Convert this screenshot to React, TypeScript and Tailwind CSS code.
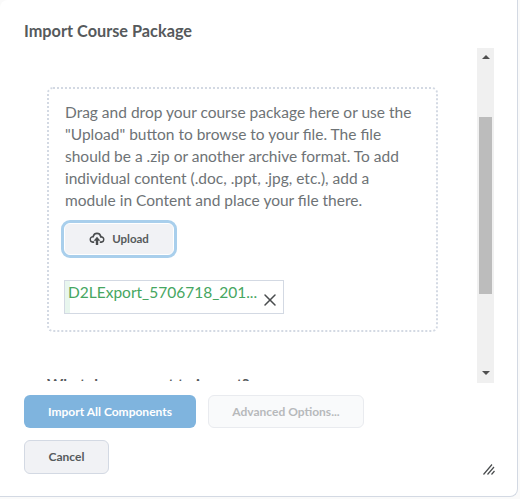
import { X } from "lucide-react";

const UploadIcon = () => (
  <svg width="16" height="13" viewBox="0 0 16 13">
    <path fill="#494c4e" d="M8 0.500a4.700 4.700 0 0 1 4.500 3.400A3.600 3.600 0 0 1 12.400 11H10.800V9.300h1.500a1.800 1.800 0 0 0 0-3.600h-1.200l-.2-1A3 3 0 0 0 8 2.300a3 3 0 0 0-2.900 2.300l-.2 1H3.700a1.800 1.800 0 0 0 0 3.600h1.500V11H3.600A3.600 3.600 0 0 1 3.500 3.900 4.700 4.700 0 0 1 8 0.500z" />
    <path fill="#494c4e" d="M8 4.800 11.400 8.800H9.200V13H6.800V8.800H4.600z" />
  </svg>
);

const ResizeIcon = () => (
  <svg width="12" height="12" viewBox="0 0 12 12" stroke="#494c4e" strokeWidth="1.2" fill="none">
    <path d="M0.500 11.500 9 1.500M4.500 11.500 11 4M8.500 11.500 11.500 8" />
  </svg>
);

export default function App() {
  return (
    <div className="w-[520px] h-[499px] bg-[#fafafa] font-['Lato',sans-serif] overflow-hidden">
      <div className="w-[518px] h-[497px] bg-white rounded-br-lg rounded-tl-lg border-r border-b border-[#d3d9e3] flex flex-col relative">
        <h1 className="pl-6 pt-[21px] h-[48px] text-[16.300px] leading-5 font-bold text-[#565a5c]">Import Course Package</h1>

        <div className="h-[333px] flex pl-[47px] pr-[23px]">
          <div className="flex-1 overflow-hidden pt-[39px]">
            <div className="w-[391px] h-[245px] border-2 border-dotted border-[#d3d9e3] rounded-md pl-[15px] pt-[12px]">
              <p className="w-[354px] pl-[1px] text-[15.500px] leading-[22px] text-[#6e7376]">
                Drag and drop your course package here or use the "Upload" button to browse to your file. The file should be a .zip or another archive format. To add individual content (.doc, .ppt, .jpg, etc.), add a module in Content and place your file there.
              </p>
              <button className="mt-[12px] w-[110px] h-[32px] flex items-center justify-center gap-[7px] pb-[1px] bg-[#f1f2f5] border border-white rounded-md ring-[3px] ring-[#a9cfec] text-[11.500px] font-bold text-[#565a5c]">
                <UploadIcon />
                Upload
              </button>
              <div className="mt-[25px] w-[220px] h-[34px] flex border border-[#d3d9e3] relative">
                <div className="w-[5px] bg-[#e8f6ee]" />
                <span className="text-[15.500px] leading-[22px] text-[#46a661] whitespace-nowrap -ml-[2px]">D2LExport_5706718_201...</span>
                <X className="absolute right-[3px] top-[9px] text-[#494c4e]" size={20} strokeWidth={1.8} />
              </div>
            </div>
            <p className="mt-[42px] text-[15.500px] leading-5 font-bold text-[#565a5c]">What do you want to import?</p>
          </div>

          {/* scrollbar */}
          <div className="w-[17px] h-[335px] bg-[#f0f0f0] flex flex-col items-center">
            <div className="h-[18px] w-full flex items-center justify-center">
              <div className="w-0 h-0 border-x-[4px] border-x-transparent border-b-[4px] border-b-[#505050]" />
            </div>
            <div className="mt-[51px] w-[13px] h-[177px] bg-[#bcbcbc]" />
            <div className="mt-auto h-[20px] w-full flex items-center justify-center">
              <div className="w-0 h-0 border-x-[4px] border-x-transparent border-t-[4px] border-t-[#505050]" />
            </div>
          </div>
        </div>

        <div className="pl-6 pt-[14px] flex gap-3">
          <button className="w-[172px] h-[33px] rounded-md bg-[#7fb4de] text-white text-[12px] font-bold">Import All Components</button>
          <button className="w-[156px] h-[33px] rounded-md bg-[#f9fafb] border border-[#e9ebef] text-[#b7b9bb] text-[12px] font-bold">Advanced Options...</button>
        </div>
        <div className="pl-6 pt-[12px]">
          <button className="w-[85px] h-[34px] rounded-md bg-[#f1f2f5] border border-[#d3d9e3] text-[#565a5c] text-[12px] font-bold">Cancel</button>
        </div>

        <div className="absolute left-[483px] top-[463px]">
          <ResizeIcon />
        </div>
      </div>
    </div>
  );
}
